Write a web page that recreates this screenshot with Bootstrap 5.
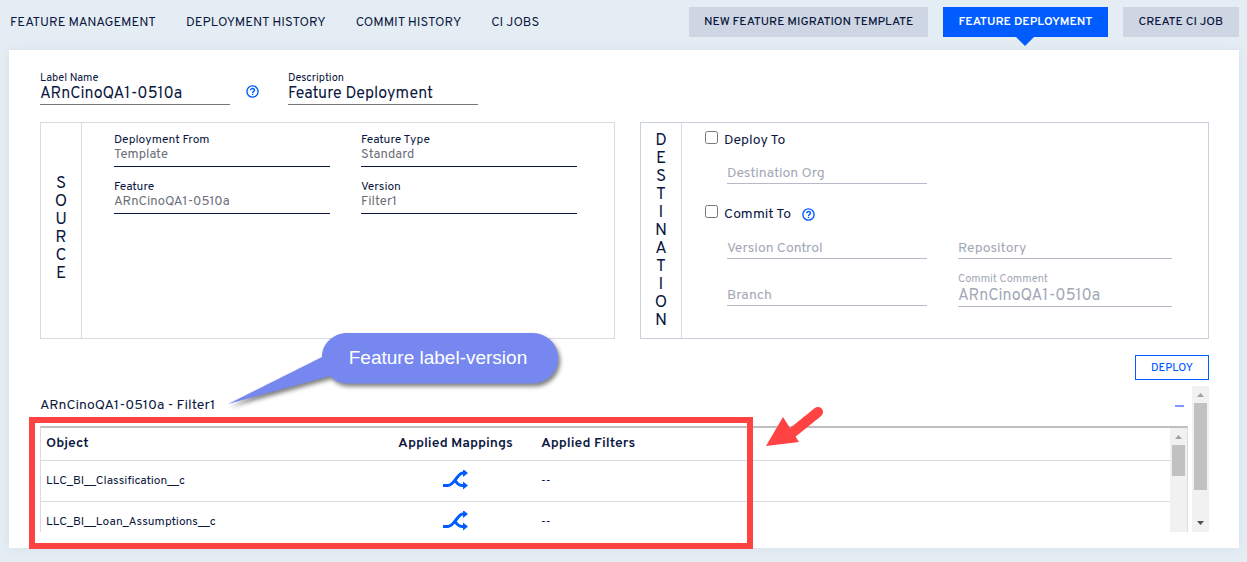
<!DOCTYPE html>
<html lang="en">
<head>
<meta charset="utf-8">
<meta name="viewport" content="width=device-width, initial-scale=1">
<title>Feature Deployment</title>
<link href="https://cdn.jsdelivr.net/npm/bootstrap@5.3.0/dist/css/bootstrap.min.css" rel="stylesheet">
<style>
  :root { --ink: #0b1740; --blue: #005cff; --line: #d9dbe2; --mark: #ff4343; }
  body { background: #e5edf4; color: var(--ink); font-family: Overpass, Roboto, sans-serif; font-size: 13px; line-height: 16px; }
  .topbar { padding: 7px 8px 13px 10px; }
  .topbar .nav { gap: 30px; }
  .topbar .nav-link { color: var(--ink); font-size: 13px; line-height: 32px; height: 30px; padding: 0; }
  .actions { gap: 15px; }
  .btn { border-radius: 0; color: var(--ink); font-size: 12px; font-weight: 500; line-height: 30px; padding: 0 15px; border: 0; }
  .btn-soft { background: #cfd6e3; height: 30px; }
  .btn-soft:last-child { padding: 0 16px; }
  .btn-current { background: var(--blue); color: #fff; font-weight: 600; height: 30px; position: relative; }
  .btn-current::after { content: ""; position: absolute; top: 100%; left: 50%; margin-left: -9px; border: 9px solid transparent; border-top-color: var(--blue); border-bottom: 0; }
  .btn-deploy { border: 1px solid var(--blue); color: var(--blue); font-size: 11px; line-height: 24px; height: 25px; padding: 0; width: 74px; }
  .sheet { background: #fff; margin: 0 8px 14px 9px; padding: 21px 30px 16px 31px; box-shadow: 0 0 10px rgba(40, 90, 130, .08); }
  .fieldbox label { display: block; font-size: 12px; line-height: 14px; }
  .fieldbox input { display: block; width: 100%; border: 0; border-bottom: 1px solid var(--ink); border-radius: 0; background: none; padding: 0 0 4px; height: 20px; font-size: 13px; line-height: 15px; color: #6b6f78; outline: 0; }
  .head-field { width: 190px; }
  .head-field label { font-size: 11px; }
  .head-field input { border-color: #777; color: var(--ink); font-size: 16px; padding: 0 0 2px; }
  .help { width: 13px; height: 13px; display: block; }
  .head-help { margin: 14px 29px 0 16px; }
  .duo { display: grid; grid-template-columns: 575fr 569fr; gap: 25px; margin-top: 17px; }
  .pane { border: 1px solid var(--line); min-height: 217px; }
  .pane-dest { border-color: #c9d0de; }
  .side { width: 41px; border-right: 1px solid var(--line); font-size: 17px; line-height: 18px; text-align: center; }
  .side p { width: min-content; margin: 0; }
  .src-grid { display: grid; grid-template-columns: 1fr 1fr; gap: 13px 31px; padding: 10px 37px 0 32px; align-content: start; }
  .dest-body { padding: 8px 36px 0 23px; }
  .tick { width: 13px; height: 13px; margin: 0 6px 0 0; }
  .tick-row { height: 18px; font-size: 14px; }
  .tick-row label { line-height: 20px; }
  .tick-row .help { margin: 3px 0 0 11px; }
  .dest-grid { display: grid; grid-template-columns: 200fr 214fr; gap: 13px 31px; padding: 14px 0 21px 22px; }
  .dest-grid.repo { padding: 15px 0 0 22px; }
  .dest-grid input, .dest-grid input::placeholder { color: #a3a8b5; opacity: 1; }
  .dest-grid input { border-color: #b4bac6; font-size: 14px; height: 21px; padding: 0; }
  .dest-grid .noted label { color: #a3a8b5; font-size: 11px; }
  .dest-grid .noted input { font-size: 16px; }
  .results { height: 146px; margin-top: 6px; }
  .results-head { height: 40px; padding: 0 8px 0 0; font-size: 14px; }
  .minus { border: 0; background: #8398ff; width: 9px; height: 2px; padding: 0; }
  .tablebox { margin-right: 4px; height: 106px; border: 1px solid var(--line); border-bottom: 0; border-top: 2px solid #bfbfc2; }
  .maps { width: 100%; table-layout: fixed; border-collapse: separate; border-spacing: 0; }
  .maps td { height: 41px; font-size: 12px; }
  .maps th, .maps td { border-bottom: 1px solid var(--line); padding: 0 5px; }
  .maps th { height: 33px; font-size: 14px; font-weight: 600; }
  .c-obj { width: 334px; } .c-map { width: 161px; } .c-fil { width: 148px; }
  .maps svg { width: 26px; height: 22px; display: block; margin: 0 auto; }
  .sbar { width: 17px; flex: none; background: #f1f1f1; }
  .sbar svg { width: 17px; height: 17px; display: block; flex: none; }
  .thumb { background: #c1c1c1; margin: 0 2px; height: 87px; }
  .thumb-s { height: 31px; }
  .callout { position: absolute; left: 188px; top: -53px; width: 340px; height: 84px; pointer-events: none; }
  .callout svg { position: absolute; inset: 0; width: 340px; height: 84px; overflow: visible; filter: drop-shadow(2px 3px 2px rgba(0, 0, 0, .5)); }
  .callout p { position: absolute; left: 92px; top: 0; width: 236px; line-height: 50px; margin: 0; text-align: center; color: #fff; font-family: "Liberation Sans", sans-serif; font-size: 19px; }
  .frame { position: absolute; left: -11px; top: 31px; width: 724px; height: 132px; border: 6px solid var(--mark); pointer-events: none; }
  .pointer { position: absolute; left: 724px; top: 18px; width: 64px; height: 46px; }
</style>
</head>
<body>
<header class="topbar d-flex justify-content-between">
  <nav class="nav flex-nowrap text-nowrap">
    <a class="nav-link" href="#">FEATURE MANAGEMENT</a>
    <a class="nav-link" href="#">DEPLOYMENT HISTORY</a>
    <a class="nav-link" href="#">COMMIT HISTORY</a>
    <a class="nav-link" href="#">CI JOBS</a>
  </nav>
  <div class="actions d-flex text-nowrap">
    <button type="button" class="btn btn-soft">NEW FEATURE MIGRATION TEMPLATE</button>
    <button type="button" class="btn btn-current">FEATURE DEPLOYMENT</button>
    <button type="button" class="btn btn-soft">CREATE CI JOB</button>
  </div>
</header>

<svg class="d-none">
  <symbol id="i-help" viewBox="0 0 13 13"><g fill="none" stroke="#005cff" stroke-width="1.4"><circle cx="6.5" cy="6.5" r="5.6"/><path d="M4.6 5.3c0-2.5 3.9-2.3 3.9 0 0 1.4-1.9 1.3-1.9 2.6M6.6 8.8v1.3"/></g></symbol>
  <symbol id="i-map" viewBox="0 0 26 22"><path d="M0 15.500h5c3 0 5-3 7.500-6s4.500-6.500 7.500-6.500h1M11.500 9.500c2 3.500 4 6 7.500 6h2" fill="none" stroke="#005cff" stroke-width="3"/><path d="M20-1l5 4-5 4zM20 11.500l5 4-5 4z" fill="#005cff"/></symbol>
  <symbol id="i-up" viewBox="0 0 17 17"><path d="M5 11h7L8.500 7z" fill="#a3a3a3"/></symbol>
  <symbol id="i-down" viewBox="0 0 17 17"><path d="M5 6h7L8.500 10z" fill="#505050"/></symbol>
</svg>

<main class="sheet">
  <div class="d-flex">
    <div class="fieldbox head-field"><label for="lname">Label Name</label><input id="lname" value="ARnCinoQA1-0510a"></div>
    <svg class="help head-help"><use href="#i-help"/></svg>
    <div class="fieldbox head-field"><label for="desc">Description</label><input id="desc" value="Feature Deployment"></div>
  </div>

  <div class="duo">
    <section class="pane d-flex">
      <div class="side d-flex align-items-center justify-content-center pb-1"><p>S O U R C E</p></div>
      <div class="src-grid flex-grow-1">
        <div class="fieldbox"><label for="from">Deployment From</label><input id="from" value="Template" readonly></div>
        <div class="fieldbox"><label for="ftype">Feature Type</label><input id="ftype" value="Standard" readonly></div>
        <div class="fieldbox"><label for="feat">Feature</label><input id="feat" value="ARnCinoQA1-0510a" readonly></div>
        <div class="fieldbox"><label for="ver">Version</label><input id="ver" value="Filter1" readonly></div>
      </div>
    </section>
    <section class="pane pane-dest d-flex">
      <div class="side d-flex align-items-center justify-content-center"><p>D E S T I N A T I O N</p></div>
      <div class="dest-body flex-grow-1">
        <div class="tick-row d-flex"><input class="tick" type="checkbox" id="dto"><label for="dto">Deploy To</label></div>
        <div class="dest-grid fieldbox"><input aria-label="Destination Org" placeholder="Destination Org"></div>
        <div class="tick-row d-flex"><input class="tick" type="checkbox" id="cto"><label for="cto">Commit To</label><svg class="help"><use href="#i-help"/></svg></div>
        <div class="dest-grid repo fieldbox">
          <input aria-label="Version Control" placeholder="Version Control">
          <input aria-label="Repository" placeholder="Repository">
          <div class="d-flex align-items-center pt-2 mt-1"><input aria-label="Branch" placeholder="Branch"></div>
          <div class="noted"><label for="ccom">Commit Comment</label><input id="ccom" value="ARnCinoQA1-0510a"></div>
        </div>
      </div>
    </section>
  </div>

  <div class="d-flex justify-content-end mt-3"><button type="button" class="btn btn-deploy">DEPLOY</button></div>

  <section class="results d-flex position-relative">
    <div class="flex-grow-1">
      <div class="results-head d-flex align-items-center justify-content-between"><span>ARnCinoQA1-0510a - Filter1</span><button type="button" class="minus" aria-label="Collapse"></button></div>
      <div class="tablebox d-flex">
        <div class="flex-grow-1 overflow-hidden">
          <table class="maps">
            <thead><tr><th class="c-obj">Object</th><th class="c-map text-center">Applied Mappings</th><th class="c-fil">Applied Filters</th><th></th></tr></thead>
            <tbody>
              <tr><td>LLC_BI__Classification__c</td><td><svg><use href="#i-map"/></svg></td><td>--</td><td></td></tr>
              <tr><td>LLC_BI__Loan_Assumptions__c</td><td><svg><use href="#i-map"/></svg></td><td>--</td><td></td></tr>
            </tbody>
          </table>
        </div>
        <div class="sbar"><svg><use href="#i-up"/></svg><div class="thumb thumb-s"></div></div>
      </div>
    </div>
    <div class="sbar d-flex flex-column"><svg><use href="#i-up"/></svg><div class="thumb"></div><svg class="mt-auto"><use href="#i-down"/></svg></div>

    <div class="callout">
      <svg viewBox="0 0 340 84"><path d="M119 0h186a25 25 0 0 1 0 50.500H119c-7 0-13-3-17-7.500L0 71l94-47C94 10 106 0 119 0z" fill="#7688f0"/></svg>
      <p>Feature label-version</p>
    </div>
    <div class="frame"></div>
    <svg class="pointer" viewBox="0 0 64 46"><path d="M28 29L54 8" stroke="#ff4343" stroke-width="10" stroke-linecap="round"/><path d="M2 42L19 13l16 25z" fill="#ff4343"/></svg>
  </section>
</main>
<script src="https://cdn.jsdelivr.net/npm/bootstrap@5.3.0/dist/js/bootstrap.bundle.min.js"></script>
</body>
</html>
